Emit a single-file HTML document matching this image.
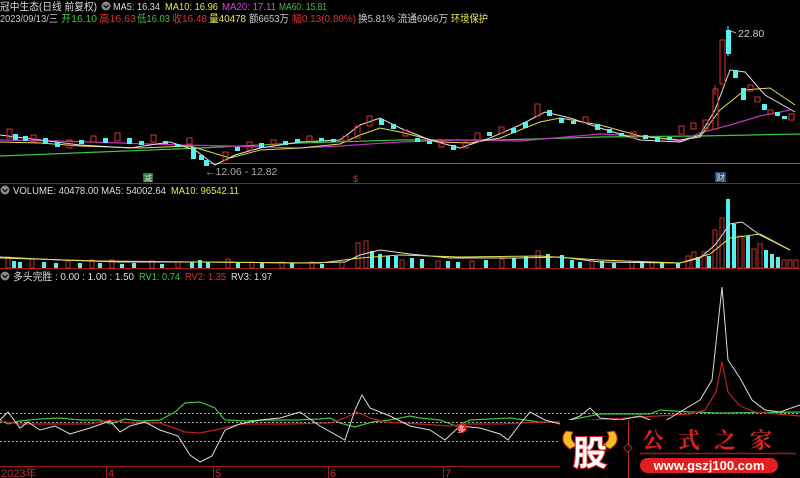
<!DOCTYPE html>
<html><head><meta charset="utf-8"><style>
html,body{margin:0;padding:0;background:#000;width:800px;height:478px;overflow:hidden}
svg{display:block}
</style></head><body>
<svg width="800" height="478" viewBox="0 0 800 478" xmlns="http://www.w3.org/2000/svg" font-family="Liberation Sans, Noto Sans CJK SC, sans-serif" font-size="10.5">
<rect width="800" height="478" fill="#000"/>
<!-- header -->
<text x="0" y="10" fill="#ddd" textLength="97" lengthAdjust="spacingAndGlyphs">冠中生态(日线 前复权)</text>
<circle cx="106" cy="6" r="4.5" fill="#888"/><path d="M103.5 5 L106 7.5 L108.5 5" stroke="#000" fill="none" stroke-width="1.2"/>
<text x="113" y="10" fill="#ddd" textLength="47" lengthAdjust="spacingAndGlyphs">MA5: 16.34</text>
<text x="165" y="10" fill="#e8e84a" textLength="53" lengthAdjust="spacingAndGlyphs">MA10: 16.96</text>
<text x="222" y="10" fill="#e040e0" textLength="54" lengthAdjust="spacingAndGlyphs">MA20: 17.11</text>
<text x="279" y="10" fill="#3ec43e" textLength="48" lengthAdjust="spacingAndGlyphs">MA60: 15.81</text>
<text x="0" y="22" fill="#ccc" textLength="58" lengthAdjust="spacingAndGlyphs">2023/09/13/三</text>
<text x="61" y="22" fill="#3ec43e" textLength="36" lengthAdjust="spacingAndGlyphs">开16.10</text>
<text x="99" y="22" fill="#e03030" textLength="37" lengthAdjust="spacingAndGlyphs">高16.63</text>
<text x="137" y="22" fill="#3ec43e" textLength="33" lengthAdjust="spacingAndGlyphs">低16.03</text>
<text x="172" y="22" fill="#e03030" textLength="35" lengthAdjust="spacingAndGlyphs">收16.48</text>
<text x="209" y="22" fill="#e8e84a" textLength="37" lengthAdjust="spacingAndGlyphs">量40478</text>
<text x="249" y="22" fill="#ccc" textLength="40" lengthAdjust="spacingAndGlyphs">额6653万</text>
<text x="292" y="22" fill="#e03030" textLength="64" lengthAdjust="spacingAndGlyphs">幅0.13(0.80%)</text>
<text x="358" y="22" fill="#ccc" textLength="90" lengthAdjust="spacingAndGlyphs">换5.81% 流通6966万</text>
<text x="451" y="22" fill="#e8e84a" textLength="37" lengthAdjust="spacingAndGlyphs">环境保护</text>

<!-- separator lines -->
<line x1="0" y1="183.5" x2="800" y2="183.5" stroke="#a01818"/>
<line x1="0" y1="268.5" x2="800" y2="268.5" stroke="#a01818"/>
<line x1="205" y1="163.5" x2="800" y2="163.5" stroke="#666"/>

<!-- MA lines main -->
<polyline fill="none" stroke="#3ec43e" stroke-width="1.2" points="0,156 100,152 200,148 300,143 400,140 500,140 600,137 700,136 800,134"/>
<polyline fill="none" stroke="#c030c0" stroke-width="1.2" points="0,140 60,141 120,143 180,145 230,146 300,148 340,146 400,142 460,140 520,141 600,134 640,136 680,141 700,133 730,125 760,116 790,110"/>
<polyline fill="none" stroke="#dede50" stroke-width="1" points="0,142 40,143 80,146 140,148 190,146 230,158 260,150 300,148 340,144 360,135 380,128 400,132 440,142 470,143 500,138 540,122 560,118 600,125 640,136 680,140 700,137 720,110 745,90 770,88 795,105"/>
<polyline fill="none" stroke="#e0e0e0" stroke-width="1" points="0,135 40,140 80,145 130,148 170,142 195,150 215,165 235,155 260,148 300,142 340,140 360,125 380,118 400,128 430,140 460,148 490,138 520,125 545,112 570,118 600,128 640,140 680,142 700,135 715,110 730,70 745,72 765,95 795,112"/>

<!-- candles -->
<g stroke-width="1">
<g fill="none" stroke="#e03030">
<rect x="7" y="129" width="5" height="9"/><rect x="31" y="135" width="5" height="7"/><rect x="67" y="140" width="5" height="8"/><rect x="91" y="136" width="5" height="6"/><rect x="115" y="133" width="5" height="8"/><rect x="151" y="135" width="5" height="7"/><rect x="187" y="138" width="5" height="6"/><rect x="223" y="152" width="5" height="8"/><rect x="247" y="142" width="5" height="8"/><rect x="271" y="140" width="5" height="5"/><rect x="307" y="136" width="5" height="5"/><rect x="343" y="136" width="5" height="5"/><rect x="355" y="126" width="5" height="12"/><rect x="367" y="116" width="5" height="10"/><rect x="403" y="130" width="5" height="6"/><rect x="439" y="141" width="5" height="6"/><rect x="463" y="142" width="5" height="6"/><rect x="475" y="133" width="5" height="8"/><rect x="499" y="127" width="5" height="6"/><rect x="535" y="104" width="5" height="12"/><rect x="583" y="117" width="5" height="6"/><rect x="631" y="132" width="5" height="6"/><rect x="679" y="126" width="5" height="8"/><rect x="691" y="123" width="5" height="6"/><rect x="703" y="120" width="5" height="9"/><rect x="713" y="89" width="5" height="40"/><rect x="720" y="40" width="5" height="44"/><rect x="748" y="85" width="5" height="6"/><rect x="755" y="97" width="5" height="5"/><rect x="768" y="110" width="5" height="4"/><rect x="789" y="114" width="5" height="6"/>
</g>
<g fill="#55f0f0">
<rect x="13" y="134" width="5" height="6"/><rect x="23" y="136" width="5" height="5"/><rect x="43" y="138" width="5" height="6"/><rect x="55" y="142" width="5" height="5"/><rect x="79" y="140" width="5" height="4"/><rect x="103" y="138" width="5" height="5"/><rect x="127" y="138" width="5" height="6"/><rect x="139" y="141" width="5" height="4"/><rect x="163" y="141" width="5" height="3"/><rect x="175" y="144" width="5" height="3"/><rect x="191" y="147" width="5" height="12"/><rect x="199" y="155" width="5" height="5"/><rect x="204" y="160" width="5" height="6"/><rect x="235" y="147" width="5" height="4"/><rect x="259" y="143" width="5" height="5"/><rect x="283" y="141" width="5" height="4"/><rect x="295" y="139" width="5" height="4"/><rect x="319" y="138" width="5" height="3"/><rect x="331" y="139" width="5" height="3"/><rect x="379" y="119" width="5" height="6"/><rect x="391" y="124" width="5" height="5"/><rect x="415" y="138" width="5" height="4"/><rect x="427" y="141" width="5" height="3"/><rect x="451" y="145" width="5" height="5"/><rect x="487" y="132" width="5" height="4"/><rect x="511" y="128" width="5" height="5"/><rect x="523" y="122" width="5" height="6"/><rect x="547" y="110" width="5" height="6"/><rect x="559" y="118" width="5" height="5"/><rect x="571" y="121" width="5" height="3"/><rect x="595" y="124" width="5" height="6"/><rect x="607" y="129" width="5" height="4"/><rect x="619" y="133" width="5" height="3"/><rect x="643" y="135" width="5" height="4"/><rect x="655" y="137" width="5" height="5"/><rect x="667" y="137" width="5" height="3"/><rect x="726" y="30" width="5" height="24"/><rect x="733" y="70" width="5" height="8"/><rect x="741" y="88" width="5" height="12"/><rect x="762" y="104" width="5" height="6"/><rect x="775" y="112" width="5" height="4"/><rect x="782" y="116" width="5" height="3"/>
</g>
</g>
<line x1="728" y1="26" x2="728" y2="56" stroke="#55f0f0"/>
<line x1="715" y1="85" x2="715" y2="95" stroke="#e03030"/>
<path d="M731 31 L736 33" stroke="#aaa"/>
<text x="738" y="37" fill="#ccc">22.80</text>
<text x="205" y="175" fill="#aaa">←12.06 - 12.82</text>
<rect x="143" y="173" width="10" height="9" fill="#2a7a3a"/><text x="144" y="181" fill="#ddd" font-size="8">减</text>
<text x="353" y="182" fill="#e03030" font-size="9">$</text>
<rect x="715" y="172" width="11" height="10" fill="#2a4a7a"/><text x="716" y="181" fill="#ddd" font-size="9">财</text>

<!-- volume header -->
<circle cx="5" cy="190" r="4.5" fill="#888"/><path d="M2.5 189 L5 191.5 L7.5 189" stroke="#000" fill="none" stroke-width="1.2"/>
<text x="13" y="194" fill="#ddd" textLength="153" lengthAdjust="spacingAndGlyphs">VOLUME: 40478.00  MA5: 54002.64</text>
<text x="171" y="194" fill="#e8e84a" textLength="68" lengthAdjust="spacingAndGlyphs">MA10: 96542.11</text>

<!-- volume bars -->
<g fill="none" stroke="#c03030">
<rect x="6" y="257" width="4" height="11"/><rect x="30" y="259" width="4" height="9"/><rect x="66" y="261" width="4" height="7"/><rect x="90" y="260" width="4" height="8"/><rect x="110" y="260" width="4" height="8"/><rect x="150" y="261" width="4" height="7"/><rect x="176" y="262" width="4" height="6"/><rect x="226" y="259" width="4" height="9"/><rect x="250" y="262" width="4" height="6"/><rect x="280" y="262" width="4" height="6"/><rect x="310" y="262" width="4" height="6"/><rect x="340" y="262" width="4" height="6"/><rect x="356" y="243" width="4" height="25"/><rect x="364" y="241" width="4" height="27"/><rect x="400" y="260" width="4" height="8"/><rect x="436" y="261" width="4" height="7"/><rect x="470" y="261" width="4" height="7"/><rect x="500" y="259" width="4" height="9"/><rect x="536" y="251" width="4" height="17"/><rect x="590" y="261" width="4" height="7"/><rect x="630" y="262" width="4" height="6"/><rect x="650" y="262" width="4" height="6"/><rect x="686" y="256" width="4" height="12"/><rect x="692" y="252" width="4" height="16"/><rect x="702" y="252" width="4" height="16"/><rect x="713" y="230" width="4" height="38"/><rect x="720" y="218" width="4" height="50"/><rect x="738" y="236" width="4" height="32"/><rect x="744" y="236" width="4" height="32"/><rect x="752" y="249" width="4" height="19"/><rect x="758" y="244" width="4" height="24"/><rect x="782" y="260" width="4" height="8"/><rect x="788" y="260" width="4" height="8"/><rect x="794" y="260" width="4" height="8"/>
</g>
<g fill="#55f0f0">
<rect x="12" y="261" width="4" height="7"/><rect x="18" y="262" width="4" height="6"/><rect x="42" y="262" width="4" height="6"/><rect x="54" y="263" width="4" height="5"/><rect x="78" y="263" width="4" height="5"/><rect x="98" y="263" width="4" height="5"/><rect x="120" y="264" width="4" height="4"/><rect x="132" y="263" width="4" height="5"/><rect x="160" y="264" width="4" height="4"/><rect x="190" y="262" width="4" height="6"/><rect x="198" y="260" width="4" height="8"/><rect x="206" y="262" width="4" height="6"/><rect x="236" y="263" width="4" height="5"/><rect x="260" y="263" width="4" height="5"/><rect x="290" y="263" width="4" height="5"/><rect x="320" y="264" width="4" height="4"/><rect x="370" y="251" width="4" height="17"/><rect x="378" y="254" width="4" height="14"/><rect x="386" y="256" width="4" height="12"/><rect x="394" y="256" width="4" height="12"/><rect x="410" y="258" width="4" height="10"/><rect x="420" y="259" width="4" height="9"/><rect x="446" y="261" width="4" height="7"/><rect x="456" y="262" width="4" height="6"/><rect x="484" y="260" width="4" height="8"/><rect x="512" y="258" width="4" height="10"/><rect x="524" y="256" width="4" height="12"/><rect x="546" y="254" width="4" height="14"/><rect x="560" y="255" width="4" height="13"/><rect x="570" y="260" width="4" height="8"/><rect x="578" y="262" width="4" height="6"/><rect x="600" y="261" width="4" height="7"/><rect x="612" y="263" width="4" height="5"/><rect x="640" y="263" width="4" height="5"/><rect x="660" y="263" width="4" height="5"/><rect x="676" y="263" width="4" height="5"/><rect x="696" y="257" width="4" height="11"/><rect x="707" y="256" width="4" height="12"/><rect x="726" y="199" width="4" height="69"/><rect x="732" y="224" width="4" height="44"/><rect x="746" y="236" width="4" height="32"/><rect x="764" y="250" width="4" height="18"/><rect x="770" y="254" width="4" height="14"/><rect x="776" y="257" width="4" height="11"/>
</g>
<polyline fill="none" stroke="#ddd" stroke-width="1" points="0,257 60,260 120,262 200,262 300,263 345,262 360,255 380,250 410,254 450,258 520,258 560,257 600,262 680,263 700,258 715,245 730,224 742,222 760,235 790,250"/>
<polyline fill="none" stroke="#dede50" stroke-width="1" points="0,258 100,261 200,262 320,263 360,258 400,255 460,257 540,256 600,260 680,263 710,254 730,238 760,234 790,250"/>

<!-- indicator header -->
<circle cx="5" cy="276" r="4.5" fill="#888"/><path d="M2.5 275 L5 277.5 L7.5 275" stroke="#000" fill="none" stroke-width="1.2"/>
<text x="13" y="280" fill="#ddd" textLength="121" lengthAdjust="spacingAndGlyphs">多头完胜 : 0.00 : 1.00 : 1.50</text>
<text x="139" y="280" fill="#3ec43e" textLength="41" lengthAdjust="spacingAndGlyphs">RV1: 0.74</text>
<text x="185" y="280" fill="#e03030" textLength="41" lengthAdjust="spacingAndGlyphs">RV2: 1.35</text>
<text x="231" y="280" fill="#ddd" textLength="41" lengthAdjust="spacingAndGlyphs">RV3: 1.97</text>

<!-- dotted lines -->
<g stroke="#aaa" stroke-dasharray="2,2">
<line x1="0" y1="413.5" x2="800" y2="413.5"/>
<line x1="0" y1="422.5" x2="560" y2="422.5"/>
<line x1="0" y1="441.5" x2="560" y2="441.5"/>
</g>
<!-- indicator lines -->
<polyline fill="none" stroke="#3ec43e" stroke-width="1.2" points="0,420 8,424 20,421 40,419 60,418 80,420 100,420 110,424 125,419 140,421 160,420 175,412 185,403 200,402 215,408 225,420 245,421 265,420 295,420 320,419 330,418 340,423 355,427 372,422 390,420 410,416 420,418 440,420 456,426 470,420 490,419 510,418 525,420 540,422 560,422 600,414 650,414 660,410 690,412 720,413 800,412"/>
<polyline fill="none" stroke="#c02020" stroke-width="1.2" points="0,421 20,424 50,424 90,424 110,420 130,423 160,423 185,432 200,433 220,429 240,424 290,424 330,423 345,418 357,412 370,418 385,422 420,424 450,426 465,424 500,424 540,422 560,422 690,414 705,410 716,392 722,362 728,392 740,406 755,412 800,416"/>
<polyline fill="none" stroke="#ddd" stroke-width="1" points="0,420 8,412 20,428 28,422 40,430 55,426 70,434 90,428 110,421 120,432 130,426 145,422 160,430 178,436 190,455 200,462 212,456 225,430 240,424 260,420 280,418 300,412 320,426 345,440 355,410 362,395 370,408 390,416 410,426 430,430 445,440 460,426 480,428 500,434 508,440 520,424 530,412 545,420 560,424 580,416 590,408 600,418 620,420 640,416 650,420 660,424 680,412 700,400 712,380 722,287 728,360 740,378 752,400 765,410 780,412 800,405"/>
<circle cx="462" cy="428" r="5" fill="#e02020"/><text x="457.5" y="432" fill="#fff" font-size="8">多</text>

<!-- bottom axis -->
<line x1="0" y1="466.5" x2="560" y2="466.5" stroke="#a01818"/>
<g stroke="#a01818">
<line x1="106.5" y1="466" x2="106.5" y2="478"/><line x1="213.5" y1="466" x2="213.5" y2="478"/><line x1="328.5" y1="466" x2="328.5" y2="478"/><line x1="443.5" y1="466" x2="443.5" y2="478"/>
</g>
<text x="1" y="477" fill="#c03030" font-size="11">2023年</text>
<text x="108" y="477" fill="#c03030" font-size="11">4</text>
<text x="215" y="477" fill="#c03030" font-size="11">5</text>
<text x="330" y="477" fill="#c03030" font-size="11">6</text>
<text x="445" y="477" fill="#c03030" font-size="11">7</text>

<!-- logo -->
<rect x="560" y="420" width="240" height="58" fill="#000"/>
<path d="M566 431 Q558 441 570 449 L577 445 Q568 439 573 432 Z" fill="#f0c020" stroke="#e02020"/>
<path d="M614 431 Q622 441 610 449 L603 445 Q612 439 607 432 Z" fill="#f0c020" stroke="#e02020"/>
<text x="573" y="465" fill="#fff" stroke="#e02020" stroke-width="2" paint-order="stroke" font-size="34" font-weight="bold" font-family="Noto Sans CJK SC, sans-serif">股</text>
<line x1="628.5" y1="420" x2="628.5" y2="478" stroke="#c02020"/>
<rect x="625" y="445" width="6" height="6" transform="rotate(45 628 448)" fill="#000" stroke="#c02020"/>
<text x="642" y="448" fill="#e02020" font-size="22" font-weight="bold" textLength="130" lengthAdjust="spacing" font-family="Noto Serif CJK SC, serif">公式之家</text>
<line x1="640" y1="453.5" x2="796" y2="453.5" stroke="#a01818" stroke-width="1.5"/>
<rect x="640" y="458" width="138" height="15" rx="7.5" fill="#e02020"/>
<text x="709" y="470" fill="#fff" font-size="13" font-weight="bold" text-anchor="middle">www.gszj100.com</text>
</svg>
</body></html>
